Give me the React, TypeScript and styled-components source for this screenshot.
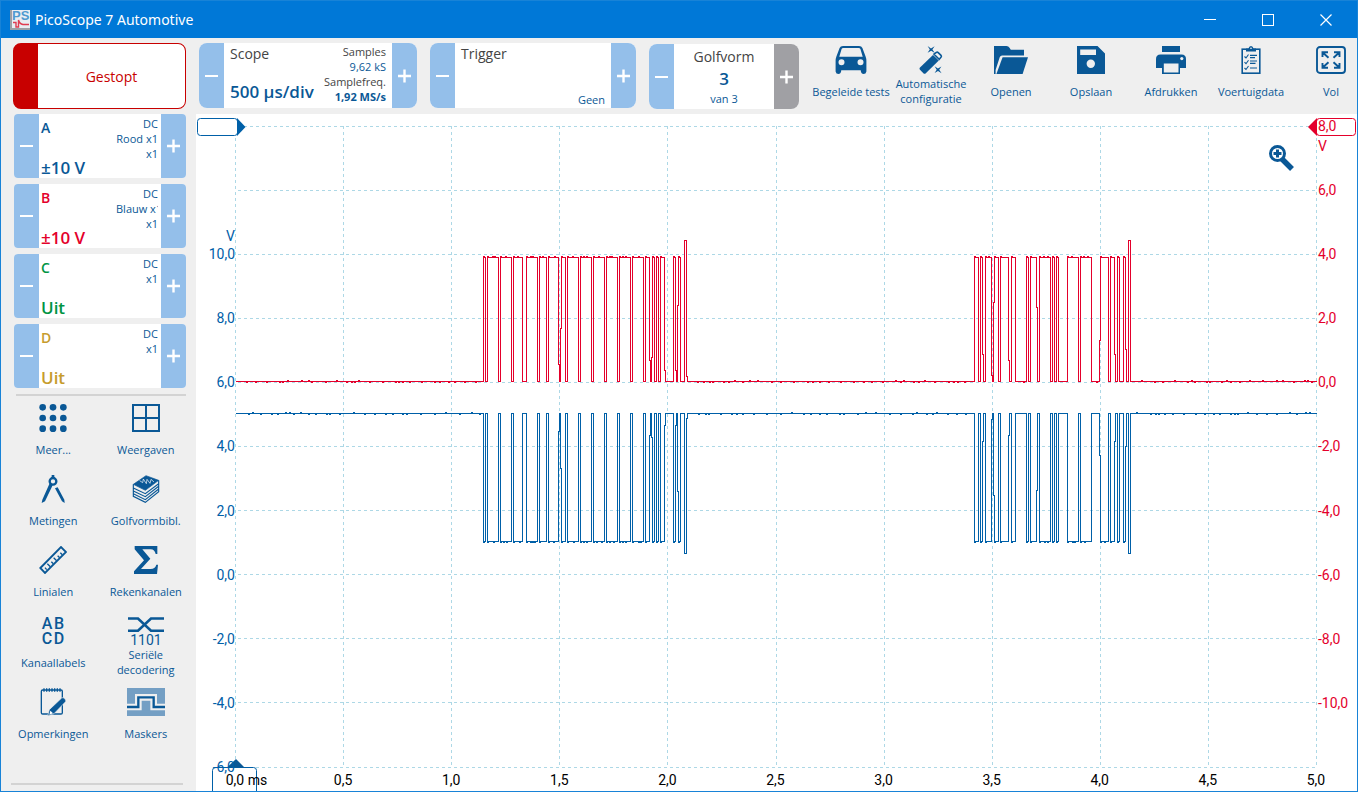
import React, { useMemo } from "react";
import styled, { createGlobalStyle } from "styled-components";

const c = {
  title: "#0078d7",
  frame: "#1883d7",
  panel: "#efefef",
  ink: "#0a5896",
  grey: "#444444",
  step: "#94bfea",
  stepOff: "#a0a0a4",
  stop: "#c80000",
  traceA: "#0060a8",
  traceB: "#e4002b",
  grid: "#add8e6",
};

const Global = createGlobalStyle`
  *, *::before, *::after { box-sizing: border-box; }
  body { margin: 0; }
  button { font: inherit; color: inherit; background: none; border: 0; padding: 0; cursor: pointer; }
  svg { display: block; }
`;

/* ---------- frame ---------- */

const Window = styled.div`
  display: flex;
  flex-direction: column;
  min-height: 100vh;
  border: 1px solid ${c.frame};
  background: ${c.panel};
  color: ${c.ink};
  font: 11px/15px "Open Sans", "Noto Sans", sans-serif;
`;

const TitleBar = styled.header`
  display: flex;
  align-items: center;
  height: 37px;
  padding: 0 2px 0 9px;
  background: ${c.title};
  color: #fff;
`;

const AppTitle = styled.h1`
  flex: 1;
  margin: 0 0 0 5px;
  font-family: "Noto Sans", sans-serif;
  font-size: 14px;
  line-height: 20px;
  font-weight: 400;
`;

const WindowButton = styled.button`
  display: grid;
  place-items: center;
  width: 58px;
  height: 37px;
`;

const Main = styled.div`
  flex: 1;
  display: grid;
  grid-template-columns: 195px minmax(0, 1fr);
`;

const Sidebar = styled.aside`
  display: flex;
  flex-direction: column;
  padding: 5px 10px 6px 12px;
`;

const Workspace = styled.main`
  display: flex;
  flex-direction: column;
  min-width: 0;
`;

/* ---------- stepper cards ---------- */

const StopButton = styled.button`
  height: 66px;
  margin-bottom: 5px;
  border: 1px solid ${c.stop};
  border-left-width: 25px;
  border-radius: 8px;
  background: #fff;
  color: ${c.stop};
  font-size: 14px;
`;

const Card = styled.section<{ $height: number; $radius: number }>`
  display: grid;
  grid-template-columns: 25px minmax(0, 1fr) 25px;
  height: ${(p) => p.$height}px;
  border-radius: ${(p) => p.$radius}px;
  overflow: hidden;
  background: #fff;
`;

const StepButton = styled.button<{ $off?: boolean }>`
  display: grid;
  place-items: center;
  background: ${(p) => (p.$off ? c.stepOff : c.step)};
`;

const Channels = styled.div`
  display: flex;
  flex-direction: column;
  gap: 6px;
  margin-left: 1px;
`;

const CardBody = styled.div`
  display: flex;
  justify-content: space-between;
  min-width: 0;
  padding: 2px 3px 0 2px;
`;

const Stack = styled.div<{ $color?: string }>`
  display: flex;
  flex-direction: column;
  justify-content: space-between;
  align-items: flex-start;
  color: ${(p) => p.$color ?? "inherit"};
`;

const Name = styled.span`
  font-size: 14px;
  line-height: 24px;
  font-weight: 600;
`;

const Value = styled.span<{ $tall?: boolean }>`
  font-size: 17px;
  line-height: ${(p) => (p.$tall ? 24 : 20)}px;
  font-weight: 600;
`;

const Notes = styled.div`
  display: flex;
  flex-direction: column;
  align-items: flex-end;
`;

const Note = styled.span`
  max-width: 42px;
  overflow: hidden;
  white-space: nowrap;
`;

/* ---------- top bar ---------- */

const TopBar = styled.div`
  display: flex;
  height: 76px;
  padding: 5px 0 0 3px;
`;

const Slot = styled.div<{ $width: number; $gap: number; $drop?: boolean }>`
  flex: 0 0 ${(p) => p.$width}px;
  margin-right: ${(p) => p.$gap}px;
  padding-top: ${(p) => (p.$drop ? 1 : 0)}px;
`;

const ScopeBody = styled.div`
  display: flex;
  justify-content: space-between;
  padding: 1px 6px 5px;
`;

const Heading = styled.span`
  color: ${c.grey};
  font-size: 14px;
  line-height: 20px;
`;

const Samples = styled.div`
  display: flex;
  flex-direction: column;
  align-items: flex-end;
  white-space: nowrap;
  em { font-style: normal; color: ${c.grey}; }
`;

const TriggerBody = styled.div`
  display: flex;
  flex-direction: column;
  justify-content: space-between;
  padding: 1px 6px;
  > :last-child { align-self: flex-end; }
`;

const WaveBody = styled.div`
  display: flex;
  flex-direction: column;
  align-items: center;
  padding-top: 3px;
`;

const Actions = styled.nav`
  flex: 1;
  display: flex;
  min-width: 0;
  overflow: hidden;
`;

const Action = styled.button`
  flex: 0 0 80px;
  display: flex;
  flex-direction: column;
  align-items: center;
  gap: 2px;
  padding-top: 3px;
`;

const ActionLabel = styled.span`
  display: flex;
  align-items: center;
  min-height: 30px;
  text-align: center;
`;

/* ---------- sidebar tools ---------- */

const Rule = styled.hr<{ $bottom?: boolean }>`
  width: ${(p) => (p.$bottom ? 172 : 170)}px;
  height: 2px;
  margin: ${(p) => (p.$bottom ? "auto 0 0 -2px" : "6px 0 5px 3px")};
  border: 0;
  background: #d3d3d3;
`;

const Tools = styled.nav`
  display: grid;
  grid-template-columns: 1fr 1fr;
  grid-auto-rows: 71px;
  margin: 0 -6px;
  align-items: start;
`;

/* ---------- chart ---------- */

const Chart = styled.section`
  flex: 1;
  position: relative;
  display: grid;
  grid-template: 12px minmax(0, 1fr) 24px / 39px minmax(0, 1fr) 41px;
  background: #fff;
  font: 14px/20px Roboto, sans-serif;
`;

const PlotSvg = styled.svg`
  grid-area: 2 / 2;
  width: 100%;
  height: 100%;
  overflow: visible;
  shape-rendering: crispEdges;
`;

const YAxis = styled.div<{ $side: "left" | "right" }>`
  grid-area: 2 / ${(p) => (p.$side === "left" ? 1 : 3)};
  display: flex;
  flex-direction: column;
  justify-content: space-between;
  align-items: ${(p) => (p.$side === "left" ? "flex-end" : "flex-start")};
  padding-left: 2px;
  color: ${(p) => (p.$side === "left" ? c.traceA : c.traceB)};
  z-index: 1;
`;

const YTick = styled.span`
  position: relative;
  display: flex;
  align-items: center;
  height: 0;
`;

const YUnit = styled.span<{ $below?: boolean }>`
  position: absolute;
  top: ${(p) => (p.$below ? 10 : -28)}px;
  ${(p) => (p.$below ? "left" : "right")}: 0;
`;

const XAxis = styled.div`
  grid-area: 3 / 2;
  display: flex;
  justify-content: space-between;
  padding-top: 3px;
  color: #000;
  z-index: 1;
`;

const XTick = styled.span`
  display: flex;
  justify-content: center;
  width: 0;
  white-space: pre;
`;

const XNumber = styled.span`
  position: relative;
`;

const XUnit = styled.span`
  position: absolute;
  left: 100%;
`;

const Marker = styled.svg<{ $at: "left" | "right" | "bottom" }>`
  position: absolute;
  ${(p) =>
    p.$at === "left"
      ? "left: 1px; top: 3px;"
      : p.$at === "right"
      ? "right: 0; top: 3px;"
      : "left: 15px; bottom: 0;"}
`;

const ZoomButton = styled.button`
  position: absolute;
  right: 62px;
  top: 30px;
`;

/* ---------- icons ---------- */

const I = c.ink;

const Minus = () => (
  <svg width="15" height="14" viewBox="0 0 15 14">
    <path d="M1 7H14" stroke="#fff" strokeWidth="2" />
  </svg>
);
const Plus = () => (
  <svg width="15" height="14" viewBox="0 0 15 14">
    <path d="M1 7H14M7.5 0.5V13.5" stroke="#fff" strokeWidth="2.4" />
  </svg>
);

const Logo = () => (
  <svg width="20" height="20" viewBox="0 0 20 20">
    <rect width="20" height="20" fill="#e9edf2" />
    <path d="M1 0V19H20" stroke="#9aa0a6" strokeWidth="2" fill="none" />
    <text x="2" y="10" fontFamily="Liberation Sans, sans-serif" fontWeight="700" fontSize="13" fill="#4f9bd0">PS</text>
    <path d="M3 12.5H6V17H8.5V10Q9.5 14 13 14.500H19" stroke="#e03c50" strokeWidth="1.4" fill="none" />
  </svg>
);

const CarIcon = () => (
  <svg width="32" height="28" viewBox="0 0 32 28">
    <path fill={I} fillRule="evenodd" d="M8 0H24Q26.600 0 27.400 2L30.600 10.500Q31.400 12.500 31.400 15V25.500Q31 28 28.500 28Q26.300 28 25.800 25V24.200H6.200V25Q5.700 28 3.500 28Q1 28 .6 25.500V15Q.6 12.500 1.400 10.500L4.600 2Q5.400 0 8 0ZM8.300 2Q7 2 6.600 3L4.300 10.800H27.700L25.400 3Q25 2 23.700 2ZM6.500 13.200A3 3 0 1 0 6.500 19.200A3 3 0 1 0 6.500 13.200ZM25.500 13.200A3 3 0 1 0 25.500 19.200A3 3 0 1 0 25.500 13.200Z" />
  </svg>
);

const WandIcon = () => (
  <svg width="26" height="28" viewBox="0 0 26 28">
    <path d="M2 21.5L15 9L20.8 14.4L7.8 27.2Q6.6 28.3 5.4 27.2L2 23.8Q1 22.6 2 21.5Z" fill={I} />
    <path d="M16 8.2L18.4 6.4Q19.3 5.8 20.2 6.6L23 9.3Q23.8 10.2 23.1 11.1L21.2 13.4Z" fill="none" stroke={I} strokeWidth="1.6" />
    <path d="M9.6 0L13 2.4L16.6 .2L14.4 3.5L16.8 7L13.2 4.8L9.6 6.8L11.8 3.4ZM16.6 20.3L19.9 22.6L23.4 20.4L21.2 23.7L23.6 27.2L20 25L16.6 27L18.7 23.7Z" fill={I} />
  </svg>
);

const FolderIcon = () => (
  <svg width="34" height="28" viewBox="0 0 34 28">
    <path d="M0 28V0H12.5Q14.5 0 15.5 1.8L16.8 3.8H30V9.5H8Q6.5 9.5 5.8 11L1.6 24V28Z" fill={I} />
    <path d="M8.6 11.2H34L28.6 28H2.4Z" fill={I} />
  </svg>
);

const SaveIcon = () => (
  <svg width="28" height="28" viewBox="0 0 28 28">
    <path fill={I} fillRule="evenodd" d="M0 0H20.5L28 7.5V28H0ZM3.2 3.6V9H19V3.6ZM13.8 13.5A4.2 4.2 0 1 0 13.8 21.9A4.2 4.2 0 1 0 13.8 13.5Z" />
  </svg>
);

const PrintIcon = () => (
  <svg width="30" height="28" viewBox="0 0 30 28">
    <path d="M6 0H24V6H6ZM4.500 8.500H25.500Q30 8.500 30 13V22H24V28H6V22H0V13Q0 8.500 4.500 8.500Z" fill={I} />
    <path d="M7.800 17.500H22.500V26.500H7.800Z" fill={c.panel} />
    <circle cx="25.800" cy="12.600" r="1.600" fill={c.panel} />
  </svg>
);

const ChecklistIcon = () => (
  <svg width="20" height="28" viewBox="0 0 20 28" fill="none" stroke={I}>
    <rect x="1.2" y="3.2" width="17.6" height="24" strokeWidth="1.6" />
    <path d="M5 5.500V2.500H7.500Q8 0 10 0T12.500 2.500H15V5.500Z" fill={I} stroke="none" />
    <circle cx="10" cy="2.200" r=".8" fill="#fff" stroke="none" />
    <path d="M3.500 10.500L5 12L7.500 8.500M3.500 16.200L5 17.700L7.500 14.200M3.500 22L5 23.500L7.500 20" strokeWidth="1.100" />
    <path d="M9 9.300H16M9 11.600H14M9 15H16M9 17.300H14.500M9 22H16" strokeWidth="1.200" />
  </svg>
);

const FullIcon = () => (
  <svg width="30" height="28" viewBox="0 0 30 28" fill="none" stroke={I} strokeWidth="1.900">
    <rect x="1" y="1" width="28" height="26" rx="3" />
    <path d="M6.500 11V6.200H12M18 6.200H23.500V11M6.500 17V21.800H12M18 21.800H23.500V17M7 6.700L12.500 11.700M23 6.700L17.500 11.700M7 21.300L12.500 16.300M23 21.300L17.500 16.300" />
  </svg>
);

const DotsIcon = () => (
  <svg width="28" height="28" viewBox="0 0 84 84" fill={I}>
    {[10, 42, 74].map((y) => [11, 42, 73].map((x) => <circle key={x + "-" + y} cx={x} cy={y} r="10" />))}
  </svg>
);

const ViewsIcon = () => (
  <svg width="28" height="28" viewBox="0 0 84 84">
    <path d="M3 3H81V81H3ZM42 3V81M3 42H81" fill="none" stroke={I} strokeWidth="6" />
  </svg>
);

const CompassIcon = () => (
  <svg width="28" height="28" viewBox="0 0 84 84">
    <circle cx="42" cy="19" r="10" fill="none" stroke={I} strokeWidth="7" />
    <path d="M38 0H46V9H38ZM32 25L41 31L18 79L8 84L10 74ZM48 40L56 37L76 74L77 84L69 79Z" fill={I} />
  </svg>
);

const BooksIcon = () => (
  <svg width="28" height="28" viewBox="0 0 84 84">
    <path d="M4 28L42 2L80 16L40 46Z" fill={I} stroke={I} strokeWidth="2" />
    <path d="M23 17L32 23L34 12L43 26L45 13L54 25L57 13L66 21" fill="none" stroke="#fff" strokeWidth="2" />
    <path d="M80 16V50L40 82L4 64V28M4 39L40 56L80 26M4 48L40 65L80 34M4 56L40 74L80 42" fill="none" stroke={I} strokeWidth="3.500" />
  </svg>
);

const RulerIcon = () => (
  <svg width="28" height="28" viewBox="0 0 84 84">
    <path d="M4 66L66 3L81 18L18 81Z" fill="none" stroke={I} strokeWidth="5.500" />
    <path d="M20 67L15 61M31 58L22 49M40 49L34 43M50 40L41 31M59 31L53 25M67 22L61 16" stroke={I} strokeWidth="4" transform="translate(3 4)" />
  </svg>
);

const SigmaIcon = () => (
  <svg width="28" height="28" viewBox="0 0 84 84">
    <path d="M8 0H76V24H71Q68 10 56 10H31L55 38L27 69H56Q69 69 73 56H78L75 84H6V76L36 43L8 10Z" fill={I} />
  </svg>
);

const LettersIcon = () => (
  <svg width="28" height="28" viewBox="0 0 28 28" overflow="visible" fill={I} fontFamily="Roboto, sans-serif" fontWeight="500" fontSize="16" textAnchor="middle">
    <text x="8" y="12">A</text>
    <text x="20" y="12">B</text>
    <text x="8" y="27">C</text>
    <text x="20" y="27">D</text>
  </svg>
);

const SerialIcon = () => (
  <svg width="36" height="28" viewBox="0 0 36 28" overflow="visible">
    <path d="M0 1.500H10L23 13.800H36M0 13.800H10L23 1.500H36" fill="none" stroke={I} strokeWidth="2.600" />
    <text x="18" y="28" fill={I} fontFamily="Roboto, sans-serif" fontSize="14" textAnchor="middle">1101</text>
  </svg>
);

const NotesIcon = () => (
  <svg width="28" height="28" viewBox="0 0 84 84">
    <rect x="7" y="6" width="63" height="72" rx="4" fill="none" stroke={I} strokeWidth="4" />
    <path d="M15 1V11M23 1V11M31 1V11M39 1V11M47 1V11M55 1V11M63 1V11" stroke={I} strokeWidth="4" />
    <path d="M68 30Q72 27 76 31L80 36Q82 40 78 43L45 77L26 84L31 65Z" fill={I} stroke={c.panel} strokeWidth="2" />
    <path d="M34 68L42 76L31 80Z" fill="#fff" />
  </svg>
);

const MaskIcon = () => (
  <svg width="38" height="28" viewBox="0 0 114 84">
    <rect width="114" height="84" fill="#749fc4" />
    <path d="M0 57H34V28H80V57H114" fill="none" stroke={c.panel} strokeWidth="20" />
    <path d="M0 57H34V28H80V57H114" fill="none" stroke={I} strokeWidth="7" />
  </svg>
);

const ZoomIcon = () => (
  <svg width="27" height="27" viewBox="0 0 27 27">
    <circle cx="9.500" cy="9.500" r="7" fill="#fff" stroke={I} strokeWidth="3" />
    <path d="M9.500 5.500V13.500M5.500 9.500H13.500" stroke={I} strokeWidth="3" />
    <path d="M14 15L24 25" stroke={I} strokeWidth="5.500" />
  </svg>
);

/* ---------- data ---------- */

const channels = [
  { id: "A", color: I, value: "±10 V", notes: ["DC", "Rood x1", "x1"] },
  { id: "B", color: c.traceB, value: "±10 V", notes: ["DC", "Blauw x1", "x1"] },
  { id: "C", color: "#009444", value: "Uit", notes: ["DC", "x1"] },
  { id: "D", color: "#c69c2d", value: "Uit", notes: ["DC", "x1"] },
];

const actions = [
  { label: "Begeleide tests", icon: <CarIcon /> },
  { label: "Automatische configuratie", icon: <WandIcon /> },
  { label: "Openen", icon: <FolderIcon /> },
  { label: "Opslaan", icon: <SaveIcon /> },
  { label: "Afdrukken", icon: <PrintIcon /> },
  { label: "Voertuigdata", icon: <ChecklistIcon /> },
  { label: "Vol", icon: <FullIcon /> },
];

const tools = [
  { label: "Meer...", icon: <DotsIcon /> },
  { label: "Weergaven", icon: <ViewsIcon /> },
  { label: "Metingen", icon: <CompassIcon /> },
  { label: "Golfvormbibl.", icon: <BooksIcon /> },
  { label: "Linialen", icon: <RulerIcon /> },
  { label: "Rekenkanalen", icon: <SigmaIcon /> },
  { label: "Kanaallabels", icon: <LettersIcon /> },
  { label: "Seriële decodering", icon: <SerialIcon /> },
  { label: "Opmerkingen", icon: <NotesIcon /> },
  { label: "Maskers", icon: <MaskIcon /> },
];

const leftTicks = ["", "", "10,0", "8,0", "6,0", "4,0", "2,0", "0,0", "-2,0", "-4,0", "-6,0"];
const rightTicks = ["8,0", "6,0", "4,0", "2,0", "0,0", "-2,0", "-4,0", "-6,0", "-8,0", "-10,0", ""];
const timeTicks = ["0,0", "0,5", "1,0", "1,5", "2,0", "2,5", "3,0", "3,5", "4,0", "4,5", "5,0"];

/* Bus levels as [time, level]; level 0 is recessive, 1 dominant, 2 the closing spike. */
const edges: [number, number][] = [
  [0, 0],
  [248, 1], [250, 0], [252, 1], [263, 0], [265, 1], [276, 0], [278, 1], [287, 0], [291, 1],
  [302, 0], [304, 1], [311, 0], [313, 1], [323, 0.14], [324, 0], [325, 0.43], [326, 1],
  [330, 0], [332, 1], [343, 0], [345, 1], [356, 0], [358, 1], [369, 0], [371, 1],
  [382, 0], [384, 1], [395, 0], [397, 1], [408, 0], [410, 1], [414, 0.17], [415, 0],
  [416, 0.19], [417, 1], [419, 0], [421, 1], [423, 0], [425, 1], [429, 0.09], [430, 0],
  [438, 1], [440, 0.09], [441, 0], [442, 0.61], [443, 1], [445, 0], [449, 2], [451, 0.04], [452, 0],
  [739, 1], [743, 0], [745, 1], [747, 0.22], [748, 0], [750, 1], [756, 0.05], [757, 0],
  [758, 0.64], [759, 1], [763, 0], [765, 1], [773, 0.17], [774, 0], [776, 1], [780, 0],
  [791, 1], [793, 0], [795, 1], [801, 0.6], [802, 0], [804, 1], [815, 0], [817, 1],
  [819, 0], [821, 1], [823, 0], [832, 1], [843, 0], [845, 1], [856, 0], [864, 0.33],
  [865, 1], [873, 0], [875, 1], [879, 0.22], [880, 0], [882, 1], [884, 0], [888, 1],
  [890, 0.26], [891, 0], [893, 2], [895, 0],
];

const PLOT_W = 1081;
const PLOT_H = 641;

function tracePath(base: number, swing: number, spike: number, seed: number) {
  let s = seed;
  const rnd = () => {
    s = (s * 1103515245 + 12345) % 2147483648;
    return s / 2147483648;
  };
  const dir = Math.sign(swing);
  let d = `M0.5 ${base + 0.5}`;
  edges.forEach(([x, level], i) => {
    const end = i + 1 < edges.length ? edges[i + 1][0] : PLOT_W;
    const y = level === 2 ? base + spike : Math.round(base + swing * level);
    const ring = level === 1 ? dir : 0;
    d += `H${x + 0.5}V${y + ring + 0.5}`;
    if (ring) d += `H${Math.min(x + 1, end) + 0.5}V${y + 0.5}`;
    let px = x + 2;
    while (px < end - 2) {
      const gap = level === 0 ? 2 + Math.floor(rnd() * 12) : 1 + Math.floor(rnd() * 4);
      px += gap;
      if (px >= end - 2) break;
      const bump = level === 1 ? dir : rnd() > 0.25 ? 1 : -1;
      d += `H${px + 0.5}V${y + bump + 0.5}H${px + 1.5}V${y + 0.5}`;
      px += 1;
    }
  });
  return d + `H${PLOT_W + 0.5}`;
}

function Plot() {
  const red = useMemo(() => tracePath(255, -124, -141, 7), []);
  const blue = useMemo(() => tracePath(287, 128, 140, 23), []);
  return (
    <PlotSvg viewBox={`0 0 ${PLOT_W} ${PLOT_H}`} preserveAspectRatio="none" role="img" aria-label="CAN-signaal">
      <g stroke={c.grid} strokeDasharray="3 3">
        {timeTicks.map((t, i) => {
          const x = Math.round(i * 108.1) + 0.5;
          return <line key={t} x1={x} x2={x} y1="0" y2={PLOT_H} vectorEffect="non-scaling-stroke" />;
        })}
        {leftTicks.map((_, i) => {
          const y = Math.floor(i * 64.1) + 0.5;
          return <line key={i} x1="3" x2={PLOT_W} y1={y} y2={y} vectorEffect="non-scaling-stroke" />;
        })}
      </g>
      <path d={blue} fill="none" stroke={c.traceA} vectorEffect="non-scaling-stroke" />
      <path d={red} fill="none" stroke={c.traceB} vectorEffect="non-scaling-stroke" />
    </PlotSvg>
  );
}

interface StepperProps {
  label: string;
  height: number;
  radius: number;
  plusOff?: boolean;
  children: React.ReactNode;
}

function Stepper({ label, height, radius, plusOff, children }: StepperProps) {
  return (
    <Card $height={height} $radius={radius} aria-label={label}>
      <StepButton aria-label={`${label} lager`}><Minus /></StepButton>
      {children}
      <StepButton $off={plusOff} aria-label={`${label} hoger`}><Plus /></StepButton>
    </Card>
  );
}

export default function App() {
  return (
    <Window>
      <Global />
      <TitleBar>
        <Logo />
        <AppTitle>PicoScope 7 Automotive</AppTitle>
        <WindowButton aria-label="Minimaliseren">
          <svg width="12" height="12" viewBox="0 0 12 12"><path d="M0 5.500H12" stroke="#fff" /></svg>
        </WindowButton>
        <WindowButton aria-label="Maximaliseren">
          <svg width="12" height="12" viewBox="0 0 12 12"><rect x=".5" y=".5" width="11" height="11" fill="none" stroke="#fff" /></svg>
        </WindowButton>
        <WindowButton aria-label="Sluiten">
          <svg width="12" height="12" viewBox="0 0 12 12"><path d="M.5 .5L11.500 11.500M11.500 .5L.5 11.500" stroke="#fff" strokeWidth="1.200" /></svg>
        </WindowButton>
      </TitleBar>
      <Main>
        <Sidebar>
          <StopButton>Gestopt</StopButton>
          <Channels>
            {channels.map((ch) => (
              <Stepper key={ch.id} label={`Kanaal ${ch.id}`} height={64} radius={4}>
                <CardBody>
                  <Stack $color={ch.color}>
                    <Name>{ch.id}</Name>
                    <Value>{ch.value}</Value>
                  </Stack>
                  <Notes>
                    {ch.notes.map((n) => <Note key={n}>{n}</Note>)}
                  </Notes>
                </CardBody>
              </Stepper>
            ))}
          </Channels>
          <Rule />
          <Tools>
            {tools.map((t) => (
              <Action key={t.label}>
                {t.icon}
                <ActionLabel>{t.label}</ActionLabel>
              </Action>
            ))}
          </Tools>
          <Rule $bottom />
        </Sidebar>
        <Workspace>
          <TopBar>
            <Slot $width={218} $gap={13}>
              <Stepper label="Tijdbasis" height={65} radius={8}>
                <ScopeBody>
                  <Stack>
                    <Heading>Scope</Heading>
                    <Value $tall>500 µs/div</Value>
                  </Stack>
                  <Samples>
                    <em>Samples</em>
                    <span>9,62 kS</span>
                    <em>Samplefreq.</em>
                    <strong>1,92 MS/s</strong>
                  </Samples>
                </ScopeBody>
              </Stepper>
            </Slot>
            <Slot $width={206} $gap={13}>
              <Stepper label="Trigger" height={65} radius={8}>
                <TriggerBody>
                  <Heading>Trigger</Heading>
                  <span>Geen</span>
                </TriggerBody>
              </Stepper>
            </Slot>
            <Slot $width={150} $gap={12} $drop>
              <Stepper label="Golfvorm" height={65} radius={8} plusOff>
                <WaveBody>
                  <Heading>Golfvorm</Heading>
                  <Value $tall>3</Value>
                  <span>van 3</span>
                </WaveBody>
              </Stepper>
            </Slot>
            <Actions>
              {actions.map((a) => (
                <Action key={a.label}>
                  {a.icon}
                  <ActionLabel>{a.label}</ActionLabel>
                </Action>
              ))}
            </Actions>
          </TopBar>
          <Chart>
            <Plot />
            <YAxis $side="left">
              {leftTicks.map((t, i) => (
                <YTick key={i}>
                  {t}
                  {t === "10,0" && <YUnit>V</YUnit>}
                </YTick>
              ))}
            </YAxis>
            <YAxis $side="right">
              {rightTicks.map((t, i) => (
                <YTick key={i}>
                  {t}
                  {i === 0 && <YUnit $below>V</YUnit>}
                </YTick>
              ))}
            </YAxis>
            <XAxis>
              {timeTicks.map((t, i) => (
                <XTick key={t}>
                  <XNumber>
                    {t}
                    {i === 0 && <XUnit> ms</XUnit>}
                  </XNumber>
                </XTick>
              ))}
            </XAxis>
            <Marker $at="left" width="50" height="20" viewBox="0 0 50 20">
              <rect x=".5" y="1.500" width="40" height="17" rx="3" fill="#fff" stroke={c.traceA} />
              <path d="M40 1L48.500 10L40 19Z" fill={c.traceA} />
            </Marker>
            <Marker $at="right" width="49" height="20" viewBox="0 0 49 20">
              <rect x="8.500" y="1.500" width="39" height="17" rx="3" fill="none" stroke={c.traceB} />
              <path d="M9 1L0 10L9 19Z" fill={c.traceB} />
            </Marker>
            <Marker $at="bottom" width="47" height="33" viewBox="0 0 47 33">
              <path d="M1.500 33V12.500Q1.500 9.500 4.500 9.500H42.500Q45.500 9.500 45.500 12.500V33" fill="none" stroke={c.traceA} />
              <path d="M16 9.500L25 1L33.500 9.500Z" fill={I} />
            </Marker>
            <ZoomButton aria-label="Inzoomen"><ZoomIcon /></ZoomButton>
          </Chart>
        </Workspace>
      </Main>
    </Window>
  );
}
